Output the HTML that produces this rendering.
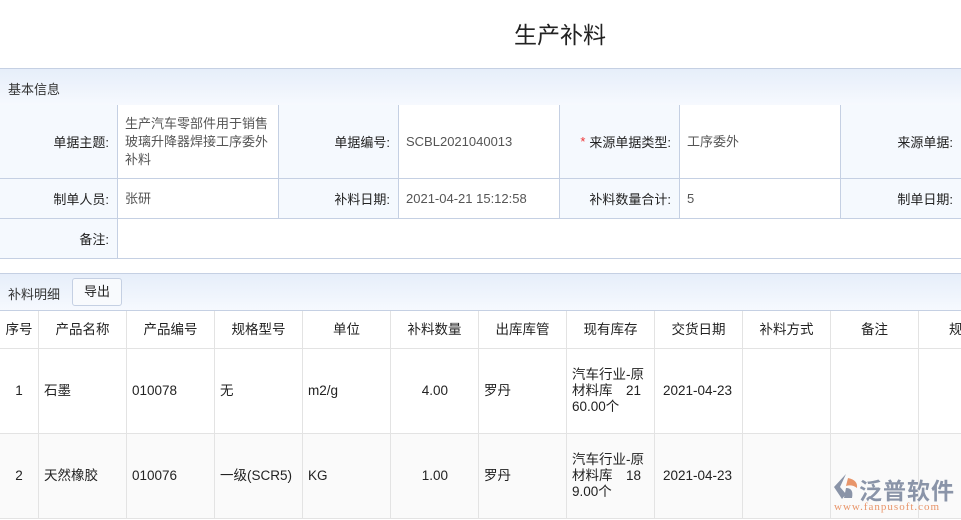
<!DOCTYPE html>
<html><head><meta charset="utf-8"><style>
*{margin:0;padding:0;box-sizing:border-box}
body{width:961px;height:520px;overflow:hidden;background:#fff;font-family:"Liberation Sans","Noto Sans CJK SC",sans-serif;font-size:13px;color:#333;position:relative}
.title{position:absolute;left:0;width:1120px;top:16px;text-align:center;font-size:23px;color:#222}
.band{position:absolute;left:0;width:961px;background:linear-gradient(#e6eefa,#f6f9fe);border-top:1px solid #c5d0e3;border-bottom:1px solid #c5d0e3}
.c{position:absolute;border-right:1px solid #c5d0e3;border-bottom:1px solid #c5d0e3;display:flex;align-items:center}
.l{background:#f5f9fe;justify-content:flex-end;padding-right:8px;color:#222}
.v{background:#fff;padding-left:7px;color:#555;line-height:18px}
.t{position:absolute;border-right:1px solid #e3e3e3;border-bottom:1px solid #e3e3e3;display:flex;align-items:center;color:#222;font-size:13.5px;line-height:16px}
</style></head><body>
<div class="title">生产补料</div>
<div class="band" style="top:68px;height:38px;padding:10px 8px">基本信息</div>

<div class="c l" style="left:0;top:105px;width:118px;height:74px">单据主题:</div>
<div class="c v" style="left:118px;top:105px;width:161px;height:74px">生产汽车零部件用于销售玻璃升降器焊接工序委外补料</div>
<div class="c l" style="left:279px;top:105px;width:120px;height:74px">单据编号:</div>
<div class="c v" style="left:399px;top:105px;width:161px;height:74px">SCBL2021040013</div>
<div class="c l" style="left:560px;top:105px;width:120px;height:74px"><span style="color:#e33;margin-right:4px">*</span>来源单据类型:</div>
<div class="c v" style="left:680px;top:105px;width:161px;height:74px">工序委外</div>
<div class="c l" style="left:841px;top:105px;width:120px;height:74px;border-right:none">来源单据:</div>

<div class="c l" style="left:0;top:179px;width:118px;height:40px">制单人员:</div>
<div class="c v" style="left:118px;top:179px;width:161px;height:40px">张研</div>
<div class="c l" style="left:279px;top:179px;width:120px;height:40px">补料日期:</div>
<div class="c v" style="left:399px;top:179px;width:161px;height:40px">2021-04-21 15:12:58</div>
<div class="c l" style="left:560px;top:179px;width:120px;height:40px">补料数量合计:</div>
<div class="c v" style="left:680px;top:179px;width:161px;height:40px">5</div>
<div class="c l" style="left:841px;top:179px;width:120px;height:40px;border-right:none">制单日期:</div>

<div class="c l" style="left:0;top:219px;width:118px;height:40px">备注:</div>
<div class="c v" style="left:118px;top:219px;width:843px;height:40px;border-right:none"></div>

<div class="band" style="top:273px;height:38px;padding:10px 8px">补料明细</div>
<div style="position:absolute;left:72px;top:278px;width:50px;height:28px;border:1px solid #c5d0e3;border-radius:3px;background:#f8fafd;text-align:center;line-height:26px;color:#222">导出</div>

<div class="t" style="left:0;top:311px;width:39px;height:38px;justify-content:center">序号</div>
<div class="t" style="left:39px;top:311px;width:88px;height:38px;justify-content:center">产品名称</div>
<div class="t" style="left:127px;top:311px;width:88px;height:38px;justify-content:center">产品编号</div>
<div class="t" style="left:215px;top:311px;width:88px;height:38px;justify-content:center">规格型号</div>
<div class="t" style="left:303px;top:311px;width:88px;height:38px;justify-content:center">单位</div>
<div class="t" style="left:391px;top:311px;width:88px;height:38px;justify-content:center">补料数量</div>
<div class="t" style="left:479px;top:311px;width:88px;height:38px;justify-content:center">出库库管</div>
<div class="t" style="left:567px;top:311px;width:88px;height:38px;justify-content:center">现有库存</div>
<div class="t" style="left:655px;top:311px;width:88px;height:38px;justify-content:center">交货日期</div>
<div class="t" style="left:743px;top:311px;width:88px;height:38px;justify-content:center">补料方式</div>
<div class="t" style="left:831px;top:311px;width:88px;height:38px;justify-content:center">备注</div>
<div class="t" style="left:919px;top:311px;width:88px;height:38px;justify-content:center">规格</div>

<div class="t" style="left:0;top:349px;width:39px;height:85px;justify-content:center">1</div>
<div class="t" style="left:39px;top:349px;width:88px;height:85px;padding-left:5px">石墨</div>
<div class="t" style="left:127px;top:349px;width:88px;height:85px;padding-left:5px">010078</div>
<div class="t" style="left:215px;top:349px;width:88px;height:85px;padding-left:5px">无</div>
<div class="t" style="left:303px;top:349px;width:88px;height:85px;padding-left:5px">m2/g</div>
<div class="t" style="left:391px;top:349px;width:88px;height:85px;justify-content:flex-end;padding-right:30px">4.00</div>
<div class="t" style="left:479px;top:349px;width:88px;height:85px;padding-left:5px">罗丹</div>
<div class="t" style="left:567px;top:349px;width:88px;height:85px;padding:0 5px">汽车行业-原材料库　21 60.00个</div>
<div class="t" style="left:655px;top:349px;width:88px;height:85px;padding-left:8px">2021-04-23</div>
<div class="t" style="left:743px;top:349px;width:88px;height:85px"></div>
<div class="t" style="left:831px;top:349px;width:88px;height:85px"></div>
<div class="t" style="left:919px;top:349px;width:88px;height:85px"></div>

<div class="t" style="left:0;top:434px;width:39px;height:85px;justify-content:center;background:#fafafa">2</div>
<div class="t" style="left:39px;top:434px;width:88px;height:85px;padding-left:5px;background:#fafafa">天然橡胶</div>
<div class="t" style="left:127px;top:434px;width:88px;height:85px;padding-left:5px;background:#fafafa">010076</div>
<div class="t" style="left:215px;top:434px;width:88px;height:85px;padding-left:5px;background:#fafafa">一级(SCR5)</div>
<div class="t" style="left:303px;top:434px;width:88px;height:85px;padding-left:5px;background:#fafafa">KG</div>
<div class="t" style="left:391px;top:434px;width:88px;height:85px;justify-content:flex-end;padding-right:30px;background:#fafafa">1.00</div>
<div class="t" style="left:479px;top:434px;width:88px;height:85px;padding-left:5px;background:#fafafa">罗丹</div>
<div class="t" style="left:567px;top:434px;width:88px;height:85px;padding:0 5px;background:#fafafa">汽车行业-原材料库　18 9.00个</div>
<div class="t" style="left:655px;top:434px;width:88px;height:85px;padding-left:8px;background:#fafafa">2021-04-23</div>
<div class="t" style="left:743px;top:434px;width:88px;height:85px;background:#fafafa"></div>
<div class="t" style="left:831px;top:434px;width:88px;height:85px;background:#fafafa"></div>
<div class="t" style="left:919px;top:434px;width:88px;height:85px;background:#fafafa"></div>

<svg style="position:absolute;left:830px;top:472px" width="30" height="30" viewBox="0 0 30 30"><path d="M16 2 L4 15 L12 27 L16 22 L10 15 Z" fill="#8a94a8"/><path d="M18 6 Q28 8 27 16 Q22 12 16 14 Z" fill="#e8956a"/><path d="M16 16 Q24 16 22 26 L14 26 Z" fill="#8a94a8"/></svg>
<div style="position:absolute;left:859px;top:472px;font-size:23px;color:#8a94a8;font-weight:bold;letter-spacing:1px">泛普软件</div>
<div style="position:absolute;left:834px;top:501px;font-size:11px;color:#e8956a;font-family:'Liberation Serif',serif;letter-spacing:1px">www.fanpusoft.com</div>
</body></html>
